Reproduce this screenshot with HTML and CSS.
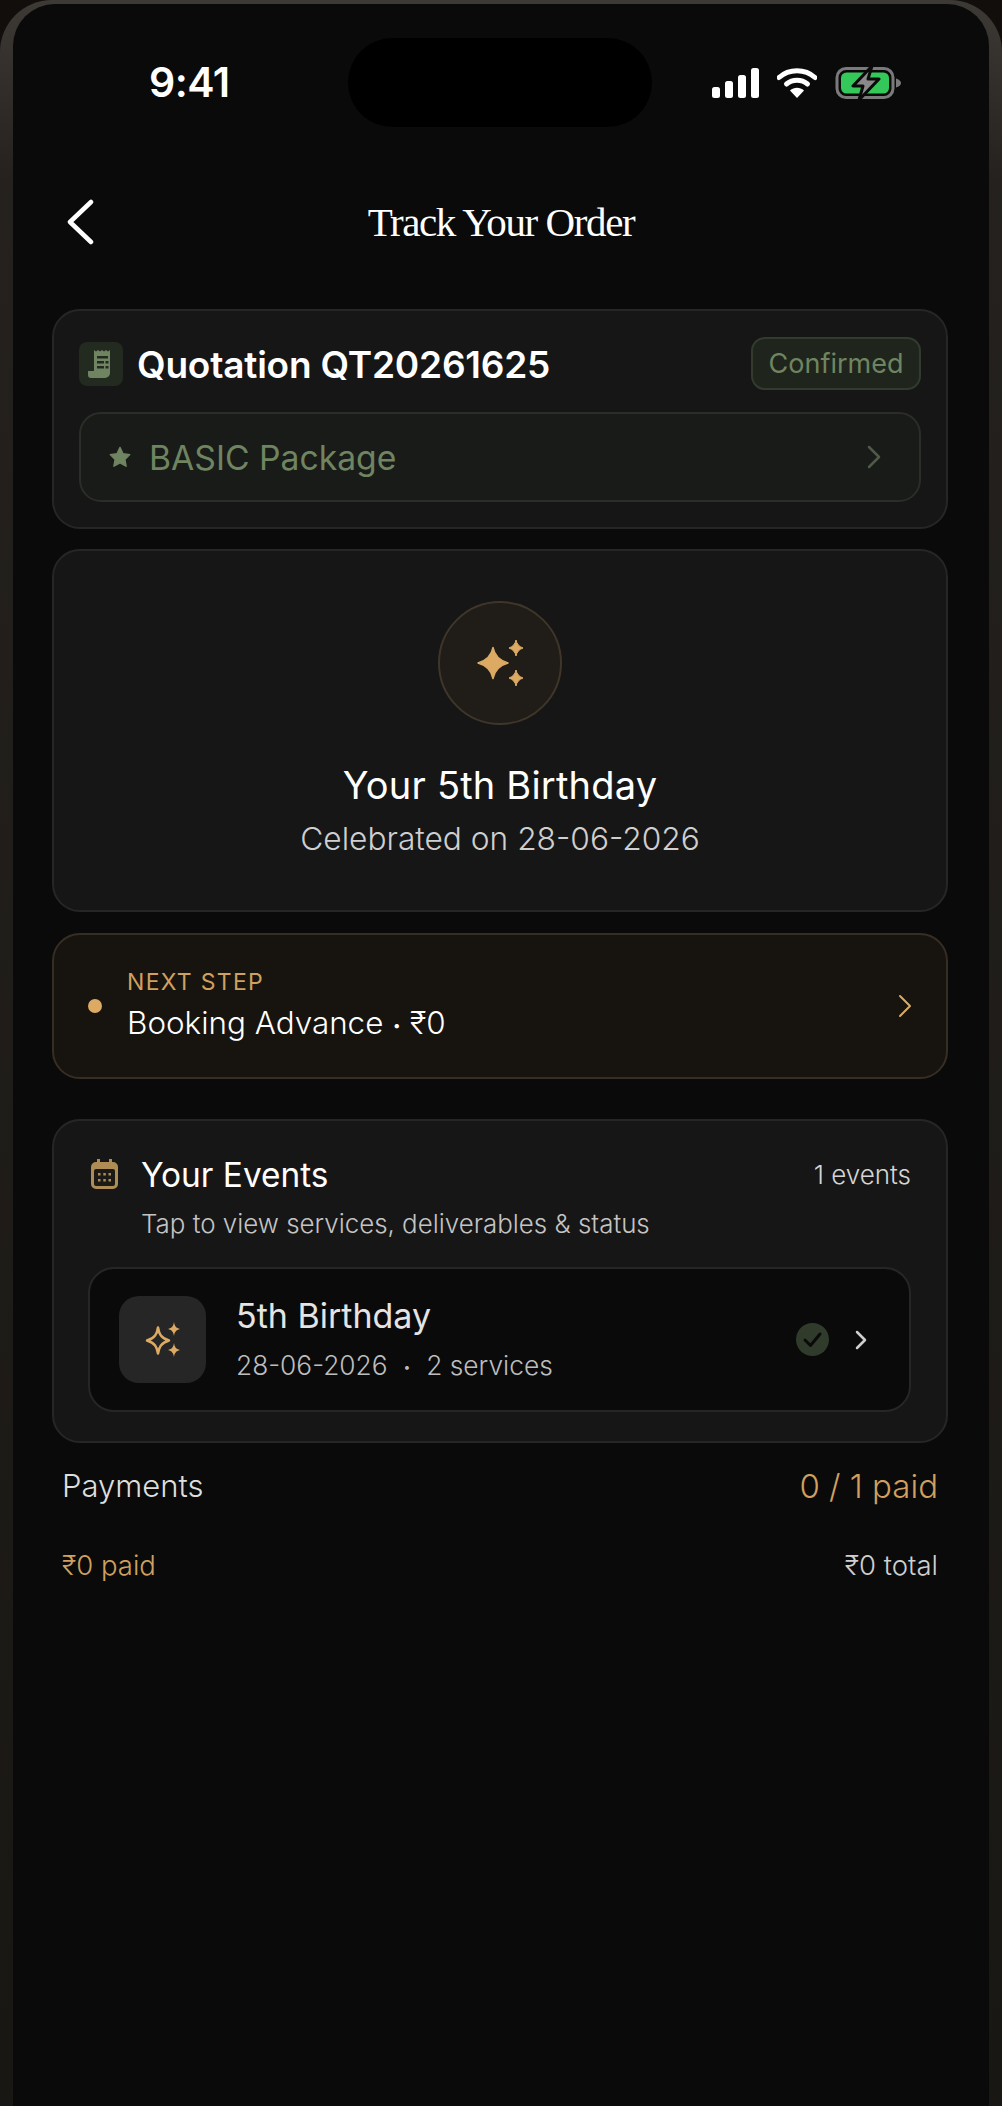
FILE: index.html
```html
<!DOCTYPE html>
<html lang="en">
<head>
    <meta charset="UTF-8">
    <meta name="viewport" content="width=device-width, initial-scale=1.0">
    <title>Track Your Order</title>
    <link rel="stylesheet" href="styles.css">
</head>
<body>
    <div class="phone">
        <div class="screen">
            <div class="status-bar">
                <span class="clock">9:41</span>
                <div class="island"></div>
                <div class="status-icons">
                    <svg width="47" height="30" viewBox="0 0 47 30"><rect x="0" y="19" width="8" height="11" rx="2.5" fill="#fff"/><rect x="13" y="13" width="8" height="17" rx="2.5" fill="#fff"/><rect x="26" y="7" width="8" height="23" rx="2.5" fill="#fff"/><rect x="39" y="0" width="8" height="30" rx="2.5" fill="#fff"/></svg>
                    <svg width="40" height="30" viewBox="0 0 40 30"><path d="M2 9.5C12 0.5 28 0.5 38 9.5" fill="none" stroke="#fff" stroke-width="5" stroke-linecap="round"/><path d="M9.5 16C15.5 11 24.5 11 30.5 16" fill="none" stroke="#fff" stroke-width="5" stroke-linecap="round"/><path d="M13 22.5C17 18.8 23 18.8 27 22.5L20 30Z" fill="#fff"/></svg>
                    <svg width="67" height="34" viewBox="0 0 67 34"><rect x="2" y="2.500" width="56" height="29" rx="9" fill="none" stroke="#7a7a7a" stroke-width="3"/><rect x="6" y="6.500" width="48" height="21" rx="5.500" fill="#34c759"/><path d="M61 12.500c3 1 5 2.500 5 4.500s-2 3.500-5 4.500z" fill="#7a7a7a"/><path d="M37 0L18 20H28L24 34L44 13H33Z" fill="#8a8a8a" stroke="#0a0a0a" stroke-width="3" stroke-linejoin="round"/></svg>
                </div>
            </div>

            <div class="nav">
                <svg class="nav-back" width="28" height="46" viewBox="0 0 28 46"><path d="M25 3L4 23L25 43" fill="none" stroke="#fff" stroke-width="4.500" stroke-linecap="round" stroke-linejoin="round"/></svg>
                <h1 class="nav-title">Track Your Order</h1>
            </div>

            <div class="content">
                <section class="card quote-card">
                    <div class="quote-head">
                        <div class="receipt-box">
                            <svg width="26" height="30" viewBox="0 0 26 30"><path d="M6 1l2 1.500 2-1.500 2 1.500 2-1.500 2 1.500 2-1.500 2 1.500 2-1.500V24a5 5 0 0 1-5 5H3a3 3 0 0 1-3-3v-4h6Z" fill="#6f8460"/><rect x="9" y="7" width="11" height="2.500" fill="#232a20"/><rect x="9" y="12" width="7" height="2.500" fill="#232a20"/><rect x="17.500" y="12" width="3" height="2.500" fill="#232a20"/><rect x="9" y="17" width="7" height="2.500" fill="#232a20"/><rect x="17.500" y="17" width="3" height="2.500" fill="#232a20"/></svg>
                        </div>
                        <h2 class="quote-title">Quotation QT20261625</h2>
                        <span class="pill">Confirmed</span>
                    </div>
                    <div class="package-row">
                        <svg width="22" height="22" viewBox="0 0 24 24"><path d="M12 1.500l3.300 6.900 7.400 1-5.400 5.200 1.400 7.500L12 18.400l-6.700 3.700 1.400-7.500L1.300 9.400l7.400-1z" fill="#6f8460" stroke="#6f8460" stroke-width="1.500" stroke-linejoin="round"/></svg>
                        <span class="package-name">BASIC Package</span>
                        <svg class="row-end" width="14" height="24" viewBox="0 0 14 24"><path d="M2 2L12 12L2 22" fill="none" stroke="#4f5a48" stroke-width="2.500" stroke-linecap="round" stroke-linejoin="round"/></svg>
                    </div>
                </section>

                <section class="card hero-card">
                    <div class="hero-icon">
                        <svg width="48" height="48" viewBox="0 0 48 48" fill="#dcaa63">
                            <path d="M17 8.500C18.500 16.500 23 21.500 32 24C23 26.500 18.500 31.500 17 39.500C15.500 31.500 11 26.500 2 24C11 21.500 15.500 16.500 17 8.500Z" stroke="#dcaa63" stroke-width="1.500" stroke-linejoin="round"/>
                            <path d="M40 1C40.800 5 43 7.500 47 9C43 10.500 40.800 13 40 17C39.200 13 37 10.500 33 9C37 7.500 39.200 5 40 1Z" stroke="#dcaa63" stroke-width="1" stroke-linejoin="round"/>
                            <path d="M40 31C40.800 35 43 37.500 47 39C43 40.500 40.800 43 40 47C39.200 43 37 40.500 33 39C37 37.500 39.200 35 40 31Z" stroke="#dcaa63" stroke-width="1" stroke-linejoin="round"/>
                        </svg>
                    </div>
                    <h2 class="hero-title">Your 5th Birthday</h2>
                    <p class="hero-sub">Celebrated on 28-06-2026</p>
                </section>

                <section class="card next-card">
                    <span class="next-dot"></span>
                    <div class="next-text">
                        <div class="next-label">NEXT STEP</div>
                        <div class="next-value">Booking Advance <span class="value-dot">•</span> ₹0</div>
                    </div>
                    <svg class="row-end" width="14" height="24" viewBox="0 0 14 24"><path d="M2 2L12 12L2 22" fill="none" stroke="#dcaa63" stroke-width="2" stroke-linecap="round" stroke-linejoin="round"/></svg>
                </section>

                <section class="card events-card">
                    <div class="events-head">
                        <svg width="27" height="30" viewBox="0 0 27 30"><path d="M6 0h3v3h9V0h3v3h1a5 5 0 0 1 5 5v17a5 5 0 0 1-5 5H5a5 5 0 0 1-5-5V8a5 5 0 0 1 5-5h1Z" fill="#b08c55"/><rect x="3" y="10" width="21" height="17" rx="2" fill="#1c1a16"/><g fill="#b08c55"><rect x="7" y="14" width="2.500" height="2.500"/><rect x="12.300" y="14" width="2.500" height="2.500"/><rect x="17.500" y="14" width="2.500" height="2.500"/><rect x="7" y="20" width="2.500" height="2.500"/><rect x="12.300" y="20" width="2.500" height="2.500"/><rect x="17.500" y="20" width="2.500" height="2.500"/></g></svg>
                        <h2 class="events-title">Your Events</h2>
                        <span class="events-count">1 events</span>
                    </div>
                    <p class="events-hint">Tap to view services, deliverables &amp; status</p>
                    <div class="event-row">
                        <div class="event-icon">
                            <svg width="36" height="38" viewBox="0 0 36 38">
                                <path d="M13 6.500C14 13 16 17 24 19.500C16 22 14 26 13 32.500C12 26 10 22 2 19.500C10 17 12 13 13 6.500Z" fill="none" stroke="#dcaa63" stroke-width="2.500" stroke-linejoin="round"/>
                                <path d="M29 1C29.700 5 31 7 35 8C31 9 29.700 11 29 15C28.300 11 27 9 23 8C27 7 28.300 5 29 1Z" fill="#dcaa63"/>
                                <path d="M29 22C29.700 26 31 28 35 29C31 30 29.700 32 29 36C28.300 32 27 30 23 29C27 28 28.300 26 29 22Z" fill="#dcaa63"/>
                            </svg>
                        </div>
                        <div class="event-text">
                            <div class="event-name">5th Birthday</div>
                            <div class="event-meta">28-06-2026 <span class="meta-dot">•</span> 2 services</div>
                        </div>
                        <svg class="event-check" width="33" height="33" viewBox="0 0 33 33"><circle cx="16.500" cy="16.500" r="16.500" fill="#313b2c"/><path d="M9 17L14.500 22.500L24 11" fill="none" stroke="#0a0a0a" stroke-width="3" stroke-linecap="round" stroke-linejoin="round"/></svg>
                        <svg class="event-chevron" width="12" height="20" viewBox="0 0 12 20"><path d="M2 2L10 10L2 18" fill="none" stroke="#cfcfcf" stroke-width="2.500" stroke-linecap="round" stroke-linejoin="round"/></svg>
                    </div>
                </section>

                <section class="payments">
                    <div class="pay-row">
                        <span class="pay-title">Payments</span>
                        <span class="pay-count">0 / 1 paid</span>
                    </div>
                    <div class="pay-row pay-sums">
                        <span class="pay-paid">₹0 paid</span>
                        <span class="pay-total">₹0 total</span>
                    </div>
                </section>
            </div>
        </div>
    </div>
</body>
</html>
```

FILE: styles.css
```css
* {
    box-sizing: border-box;
}
body {
    margin: 0;
    background-color: #110e0c;
    font-family: 'Inter', 'Noto Sans', sans-serif;
    color: #fff;
    overflow: hidden;
}
h1, h2, p {
    margin: 0;
    font-weight: normal;
}
.phone {
    width: 1002px;
    height: 2106px;
    padding: 4px 13px 0;
    border-radius: 52px 52px 0 0;
    background: linear-gradient(180deg, #3d3a36 0, #24211e 180px, #191714 100%);
}
.screen {
    height: 100%;
    background-color: #0a0a0a;
    border-radius: 42px 42px 0 0;
}

/* status bar */
.status-bar {
    height: 123px;
    padding-top: 34px;
    position: relative;
}
.clock {
    position: absolute;
    left: 136px;
    top: 55px;
    font-size: 41px;
    line-height: 46px;
    font-weight: 600;
    letter-spacing: -0.5px;
}
.island {
    width: 304px;
    height: 89px;
    margin-left: 335px;
    border-radius: 45px;
    background-color: #000;
}
.status-icons {
    position: absolute;
    left: 699px;
    top: 62px;
    display: flex;
    align-items: center;
    gap: 18px;
}

/* nav */
.nav {
    height: 50px;
    margin-top: 70px;
    position: relative;
    display: flex;
    justify-content: center;
    align-items: center;
}
.nav-back {
    position: absolute;
    left: 53px;
    top: 2px;
}
.nav-title {
    font-family: 'Liberation Serif', serif;
    font-size: 41px;
    line-height: 50px;
    letter-spacing: -1.4px;
}

.content {
    margin-top: 62px;
    padding: 0 41px 0 39px;
}
.card {
    background-color: #161616;
    border: 2px solid #262626;
    border-radius: 28px;
}

/* quotation */
.quote-card {
    padding: 26px 25px 25px;
}
.quote-head {
    display: flex;
    align-items: center;
}
.receipt-box {
    width: 44px;
    height: 44px;
    border-radius: 8px;
    background-color: #232a20;
    display: flex;
    justify-content: center;
    align-items: center;
}
.quote-title {
    margin: 2px 0 0 14px;
    font-size: 37px;
    font-weight: 600;
    line-height: 44px;
    letter-spacing: -0.2px;
}
.pill {
    margin-left: auto;
    height: 53px;
    width: 170px;
    border: 2px solid #333b2e;
    border-radius: 14px;
    background-color: #1f251c;
    color: #6f8460;
    font-size: 27px;
    line-height: 50px;
    text-align: center;
}
.package-row {
    height: 90px;
    margin-top: 22px;
    padding: 0 38px 0 28px;
    display: flex;
    align-items: center;
    gap: 18px;
    border: 2px solid #2a2d28;
    border-radius: 22px;
    background-color: #191b18;
}
.package-name {
    color: #6f8460;
    font-size: 33.700px;
}
.row-end {
    margin-left: auto;
}

/* birthday */
.hero-card {
    margin-top: 20px;
    padding: 50px 0 52px;
    text-align: center;
}
.hero-icon {
    width: 124px;
    height: 124px;
    margin: 0 auto;
    border: 2px solid #3f3629;
    border-radius: 50%;
    background-color: #201c18;
    display: flex;
    justify-content: center;
    align-items: center;
}
.hero-title {
    margin-top: 38px;
    font-size: 38px;
    line-height: 44px;
    letter-spacing: 0.2px;
}
.hero-sub {
    margin-top: 13px;
    color: #cfcfcf;
    font-size: 31.700px;
    font-weight: 300;
    line-height: 38px;
}

/* next step */
.next-card {
    height: 146px;
    margin-top: 21px;
    padding: 0 34px 0 34px;
    display: flex;
    align-items: center;
    background-color: #17130f;
    border-color: #362e22;
}
.next-dot {
    width: 14px;
    height: 14px;
    border-radius: 50%;
    background-color: #dcaa63;
}
.next-text {
    margin-left: 25px;
}
.next-label {
    color: #cfa05f;
    font-size: 23px;
    line-height: 30px;
    letter-spacing: 1.300px;
}
.next-value {
    margin-top: 6px;
    font-size: 31.400px;
    font-weight: 300;
    line-height: 40px;
}
.value-dot {
    font-size: 16px;
    vertical-align: 3px;
}

/* events */
.events-card {
    margin-top: 40px;
    padding: 33px 35px 29px 34px;
}
.events-head {
    display: flex;
    align-items: center;
    padding-left: 3px;
}
.events-title {
    margin: 1px 0 -1px 23px;
    font-size: 33.400px;
    line-height: 40px;
}
.events-count {
    margin-left: auto;
    color: #d5d5d5;
    font-size: 26px;
    font-weight: 300;
}
.events-hint {
    margin: 14px 0 27px 53px;
    color: #c4c4c4;
    font-size: 25.900px;
    font-weight: 300;
    line-height: 32px;
}
.event-row {
    height: 145px;
    padding: 0 42px 0 29px;
    display: flex;
    align-items: center;
    border: 2px solid #262626;
    border-radius: 26px;
    background-color: #0a0a0a;
}
.event-icon {
    width: 87px;
    height: 87px;
    border-radius: 20px;
    background-color: #262626;
    display: flex;
    justify-content: center;
    align-items: center;
}
.event-text {
    margin-left: 30px;
}
.event-name {
    color: #e4e4e4;
    font-size: 34px;
    line-height: 40px;
    margin-top: -1px;
}
.event-meta {
    margin-top: 14px;
    color: #bdbdbd;
    font-size: 26.300px;
    font-weight: 300;
    line-height: 32px;
}
.meta-dot {
    margin: 0 8px;
    font-size: 14px;
    vertical-align: 3px;
}
.event-check {
    margin-left: auto;
}
.event-chevron {
    margin-left: 26px;
}

/* payments */
.payments {
    margin-top: 24px;
    padding: 0 10px;
}
.pay-row {
    display: flex;
    justify-content: space-between;
}
.pay-title {
    color: #dedede;
    font-size: 31px;
    font-weight: 300;
    line-height: 38px;
}
.pay-count {
    color: #cfa05f;
    font-size: 33px;
    font-weight: 300;
    line-height: 38px;
}
.pay-sums {
    margin-top: 44px;
    font-size: 27.500px;
    font-weight: 300;
    line-height: 32px;
}
.pay-paid {
    color: #cfa05f;
}
.pay-total {
    color: #cfcfcf;
}
```
